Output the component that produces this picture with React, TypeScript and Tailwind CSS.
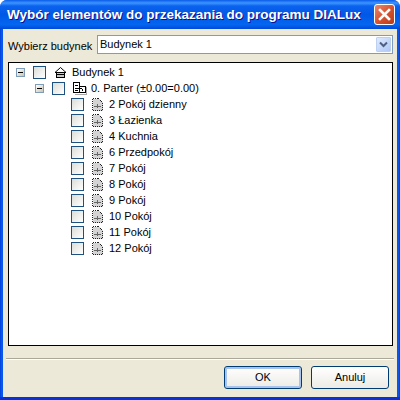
import React from 'react';

const ROOMS = ['2 Pokój dzienny', '3 Łazienka', '4 Kuchnia', '6 Przedpokój', '7 Pokój', '8 Pokój', '9 Pokój', '10 Pokój', '11 Pokój', '12 Pokój'];

function Expander() {
  return (
    <span className="flex h-[9px] w-[9px] shrink-0 items-center justify-center border border-[#7f9db9] bg-gradient-to-br from-white to-[#c9c5b4]">
      <span className="h-px w-[5px] bg-black" />
    </span>
  );
}

function Check() {
  return <span className="block h-[13px] w-[13px] shrink-0 border border-[#1c5180] bg-gradient-to-br from-[#dcdcd7] to-white" />;
}

function HouseIcon() {
  return (
    <svg width="13" height="11" viewBox="0 0 13 11" className="shrink-0">
      <path d="M6.500.5 1 5.500h11L6.500.5Z" fill="#fff" stroke="#000" />
      <path d="M2.500 5.500h8v5h-8z" fill="#c8c8c8" stroke="#000" shapeRendering="crispEdges" />
      <path d="M2.500 7.500h8" stroke="#000" shapeRendering="crispEdges" />
    </svg>
  );
}

function FloorIcon() {
  return (
    <svg width="14" height="13" viewBox="0 0 14 13" className="shrink-0" shapeRendering="crispEdges">
      <path d="M.5.500h6v10h-6zM6.500 4.500h6v6h-6z" fill="#fff" stroke="#000" />
      <path d="M2 3h3M2 6h7M9 7v2M2 8h3" stroke="#000" />
      <path d="M13.500 5v8M2 12.500h12" stroke="#a8a8a8" />
    </svg>
  );
}

function RoomIcon() {
  return (
    <svg width="11" height="13" viewBox="0 0 11 13" className="shrink-0" shapeRendering="crispEdges">
      <path d="M.5.500h6l4 4v8H.5z" fill="#d4d4d4" stroke="#222" strokeDasharray="1 1" />
      <path d="M2 8h7M5 6v4" stroke="#666" />
    </svg>
  );
}

function CloseIcon() {
  return (
    <svg width="13" height="13" viewBox="0 0 13 13">
      <path d="M2 2l9 9M11 2l-9 9" stroke="#fff" strokeWidth="2.600" strokeLinecap="square" />
    </svg>
  );
}

function Chevron() {
  return (
    <svg width="9" height="7" viewBox="0 0 9 7">
      <path d="M1 1.500l3.500 3.500L8 1.500" fill="none" stroke="#4d6185" strokeWidth="2" />
    </svg>
  );
}

export default function App() {
  return (
    <div className="flex h-[400px] w-[400px] flex-col overflow-hidden rounded-t-[7px] bg-[linear-gradient(to_right,#0039c8,#0855f0_1px,#0855f0_399px,#0039c8)] font-['Liberation_Sans',sans-serif] text-[11px] text-black">
      <div className="flex h-[29px] shrink-0 items-center justify-between bg-[linear-gradient(to_bottom,#0a5ce8,#3d95ff_3px,#0a62ee_6px,#0058e6_50%,#0466f0_85%,#0048d8)] pl-[7px] pr-[5px]">
        <span className="whitespace-nowrap text-[13.500px] leading-none font-bold text-white [text-shadow:1px_1px_0_#0f1089]">
          Wybór elementów do przekazania do programu DIALux
        </span>
        <span className="flex h-[21px] w-[21px] items-center justify-center rounded-[3px] border border-white bg-gradient-to-br from-[#e8866c] via-[#d8532f] to-[#b93a18]">
          <CloseIcon />
        </span>
      </div>

      <div className="mx-[3px] flex min-h-0 flex-1 flex-col bg-[#ece9d8] pt-[6px]">
        <div className="flex h-[19px] shrink-0 items-center pl-[5px] pr-[4px]">
          <span className="w-[89px] shrink-0 whitespace-nowrap pt-[3px]">Wybierz budynek</span>
          <div className="flex h-[19px] flex-1 items-center justify-between border border-[#7f9db9] bg-white pl-[2px] pr-px">
            <span>Budynek 1</span>
            <span className="flex h-[15px] w-[15px] items-center justify-center rounded-[1px] border border-[#bcd0f0] bg-gradient-to-br from-[#e1eafe] to-[#aec8f7]">
              <Chevron />
            </span>
          </div>
        </div>

        <div className="mt-[8px] ml-[5px] mr-[4px] h-[284px] shrink-0 border border-black bg-white pt-px">
          <div className="flex h-[16px] items-center pl-[7px]">
            <Expander />
            <span className="ml-[8px]"><Check /></span>
            <span className="ml-[8px] flex items-center gap-[5px]"><HouseIcon /><span>Budynek 1</span></span>
          </div>
          <div className="flex h-[16px] items-center pl-[26px]">
            <Expander />
            <span className="ml-[8px]"><Check /></span>
            <span className="ml-[8px] flex items-center gap-[4px]"><FloorIcon /><span>0. Parter (±0.00=0.00)</span></span>
          </div>
          {ROOMS.map((room) => (
            <div key={room} className="flex h-[16px] items-center pl-[62px]">
              <Check />
              <span className="ml-[8px] flex items-center gap-[6px]"><RoomIcon /><span>{room}</span></span>
            </div>
          ))}
        </div>

        <div className="mt-[12px] ml-[3px] mr-[3px] h-[2px] shrink-0 border-t border-b border-t-[#aca899] border-b-white" />

        <div className="mt-[6px] flex justify-end gap-[9px] pr-[8px]">
          <button className="h-[23px] w-[78px] rounded-[3px] border border-[#003c74] bg-gradient-to-b from-white to-[#ecebe5] shadow-[inset_0_0_0_2px_#a9c4ec]">OK</button>
          <button className="h-[23px] w-[78px] rounded-[3px] border border-[#003c74] bg-gradient-to-b from-white to-[#ecebe5]">Anuluj</button>
        </div>
        <div className="flex-1" />
      </div>
      <div className="h-[3px] shrink-0 bg-[#0831d9]" />
    </div>
  );
}
